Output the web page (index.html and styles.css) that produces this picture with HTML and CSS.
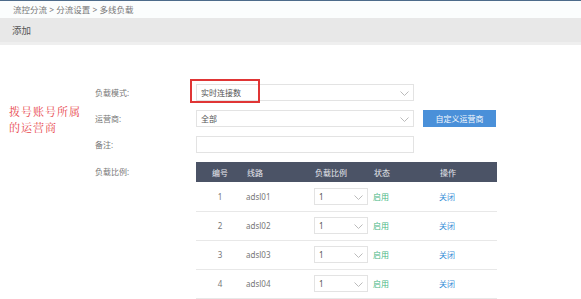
FILE: index.html
```html
<!doctype html>
<html>
<head>
	<title>多线负载</title>
	<link rel="stylesheet" href="styles.css">
</head>
<body>
<div class="topline"></div>
<div class="crumbs">流控分流 &gt; 分流设置 &gt; 多线负载</div>
<div class="titlebar">添加</div>
<div class="main">
	<div class="note">拨号账号所属<br>的运营商</div>
	<div class="form">
		<div class="row">
			<label>负载模式:</label>
			<div class="select wide">
				<span>实时连接数</span>
				<svg class="chev" width="9" height="5" viewBox="0 0 9 5"><path d="M0.5 0.5 L4.5 4.5 L8.5 0.5" fill="none" stroke="#bbb" stroke-width="1"/></svg>
				<div class="mark"></div>
			</div>
		</div>
		<div class="row">
			<label>运营商:</label>
			<div class="select wide">
				<span>全部</span>
				<svg class="chev" width="9" height="5" viewBox="0 0 9 5"><path d="M0.5 0.5 L4.5 4.5 L8.5 0.5" fill="none" stroke="#bbb" stroke-width="1"/></svg>
			</div>
			<button class="btn">自定义运营商</button>
		</div>
		<div class="row">
			<label>备注:</label>
			<div class="input wide"></div>
		</div>
		<div class="row top">
			<label class="tlabel">负载比例:</label>
			<table class="lines">
				<colgroup>
					<col style="width:48px"><col style="width:68px"><col style="width:59px"><col style="width:66px"><col style="width:60px">
				</colgroup>
				<thead>
					<tr><th class="num">编号</th><th>线路</th><th>负载比例</th><th>状态</th><th>操作</th></tr>
				</thead>
				<tbody id="rows"></tbody>
			</table>
		</div>
	</div>
</div>
<script>
  var lines = ['adsl01', 'adsl02', 'adsl03', 'adsl04'];
  var html = '';
  for (var x = 0; x < lines.length; x++) {
    html += '<tr><td class="num">' + (x + 1) + '</td><td>' + lines[x] + '</td>' +
      '<td><div class="select small"><span>1</span><svg class="chev" width="9" height="5" viewBox="0 0 9 5"><path d="M0.5 0.5 L4.5 4.5 L8.5 0.5" fill="none" stroke="#bbb" stroke-width="1"/></svg></div></td>' +
      '<td class="on">启用</td><td class="off">关闭</td></tr>';
  }
  document.getElementById('rows').innerHTML = html;
</script>
</body>
</html>
```

FILE: styles.css
```css
* {
    margin: 0;
    padding: 0;
    box-sizing: border-box;
}

body {
    font: 8px "Noto Sans", "Noto Sans CJK SC", sans-serif;
    color: #666;
    background: #fff;
}

.topline {
    height: 1px;
    background: #4d6b8a;
}

.crumbs {
    height: 17px;
    line-height: 17px;
    padding-left: 13px;
    font-size: 8.5px;
    color: #777;
    background: #fbfdfd;
}

.titlebar {
    height: 27px;
    line-height: 25px;
    padding-left: 12px;
    font-size: 9.5px;
    color: #555;
    background: #e8e8e8;
    border-bottom: 3px solid #efefef;
}

.main {
    display: flex;
    padding-top: 39px;
}

.note {
    width: 95px;
    padding: 19px 0 0 9px;
    font: 11px/16px "Noto Serif CJK SC", "Noto Sans CJK SC", serif;
    letter-spacing: 1px;
    color: #e8454a;
}

.form {
    flex: 1;
}

.row {
    display: flex;
    align-items: center;
    margin-bottom: 9px;
}

.row.top {
    align-items: flex-start;
}

.row label {
    width: 101px;
    color: #777;
}

.tlabel {
    line-height: 20px;
}

.select, .input {
    position: relative;
    display: flex;
    align-items: center;
    height: 17px;
    border: 1px solid #e3e3e3;
    background: #fff;
    color: #555;
}

.wide {
    width: 218px;
    padding-left: 4px;
}

.chev {
    position: absolute;
    right: 4px;
    top: 6px;
}

.mark {
    position: absolute;
    left: -7px;
    top: -6px;
    width: 70px;
    height: 24px;
    border: 2px solid #e03535;
}

.btn {
    margin-left: 9px;
    width: 73px;
    height: 17px;
    border: none;
    background: #4a90d9;
    color: #f4f8fd;
    font: 8px "Noto Sans", "Noto Sans CJK SC", sans-serif;
}

.lines {
    width: 301px;
    table-layout: fixed;
    border-collapse: collapse;
}

.lines th {
    height: 20px;
    background: #4b5366;
    color: #e6e8ee;
    font-weight: normal;
    text-align: left;
    padding-left: 3px;
}

.lines td {
    height: 29px;
    padding-left: 2px;
    border-bottom: 1px solid #e8e8e8;
    color: #777;
}

.lines .num {
    text-align: center;
    padding-left: 0;
}

.small {
    width: 54px;
    padding-left: 4px;
}

.lines .on {
    color: #45b883;
}

.lines .off {
    color: #3a8fd8;
}
```
